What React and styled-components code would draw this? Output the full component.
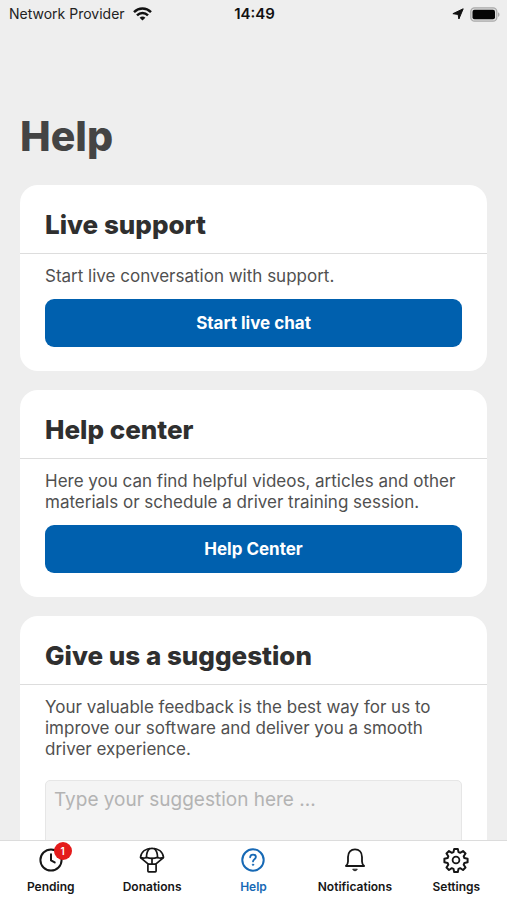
import React from "react";
import styled, { createGlobalStyle } from "styled-components";

const GlobalStyle = createGlobalStyle`
  * { box-sizing: border-box; }
  body {
    margin: 0;
    background: #eeeeee;
    font-family: Inter, "Liberation Sans", sans-serif;
  }
  h1, h2, p { margin: 0; }
`;

const Screen = styled.div`
  display: flex;
  flex-direction: column;
  height: 100vh;
  background: #eeeeee;
`;

const StatusBar = styled.header`
  display: grid;
  grid-template-columns: 1fr auto 1fr;
  align-items: center;
  height: 28px;
  flex: none;
  padding: 0 7px 0 9px;
  font-size: 14px;
  line-height: 20px;
  color: #222222;
`;

const StatusGroup = styled.div`
  display: flex;
  align-items: center;
  justify-content: ${(p) => (p.$end ? "flex-end" : "flex-start")};
  gap: ${(p) => (p.$end ? "6px" : "8px")};
`;

const Clock = styled.time`
  font-size: 15px;
  font-weight: 600;
  color: #111111;
`;

const Content = styled.main`
  flex: 1;
  min-height: 0;
  overflow-y: auto;
  scrollbar-width: none;
  padding: 80px 20px 20px;
`;

const Title = styled.h1`
  font-size: 41px;
  line-height: 56px;
  font-weight: 800;
  color: #444444;
`;

const CardList = styled.div`
  display: flex;
  flex-direction: column;
  gap: 19px;
  margin-top: 21px;
`;

const Card = styled.section`
  background: #ffffff;
  border-radius: 18px;
`;

const CardTitle = styled.h2`
  padding: 24px 25px 12px;
  border-bottom: 1px solid #dddddd;
  font-size: 26px;
  line-height: 32px;
  font-weight: 800;
  color: #2f2f2f;
`;

const CardBody = styled.div`
  display: flex;
  flex-direction: column;
  gap: ${(p) => (p.$roomy ? "20px" : "12px")};
  padding: 12px 25px 24px;
`;

const CardText = styled.p`
  font-size: 17px;
  line-height: 21px;
  color: #505050;
`;

const ActionButton = styled.button`
  height: 48px;
  border: 0;
  border-radius: 9px;
  background: #0060ae;
  color: #ffffff;
  font: inherit;
  font-size: 17px;
  font-weight: 700;
`;

const SuggestionBox = styled.textarea`
  height: 160px;
  padding: 6px 8px;
  border: 1px solid #e6e6e6;
  border-radius: 5px;
  background: #f4f4f4;
  font: inherit;
  font-size: 19px;
  line-height: 26px;
  color: #333333;
  resize: none;
  &::placeholder { color: #b3b3b3; opacity: 1; }
`;

const TabBar = styled.nav`
  display: grid;
  grid-template-columns: repeat(5, 1fr);
  flex: none;
  height: 60px;
  border-top: 1px solid #dcdcdc;
  background: #ffffff;
`;

const Tab = styled.a`
  display: flex;
  flex-direction: column;
  align-items: center;
  gap: 6px;
  padding-top: 6px;
  font-size: 12px;
  line-height: 16px;
  font-weight: 600;
  text-decoration: none;
  color: ${(p) => (p.$active ? "#1769b5" : "#161616")};
`;

const IconFrame = styled.span`
  position: relative;
  width: 26px;
  height: 26px;
`;

const Badge = styled.span`
  position: absolute;
  top: -5px;
  right: -8px;
  width: 18px;
  height: 18px;
  border-radius: 50%;
  background: #e41b1b;
  color: #ffffff;
  font-size: 10px;
  line-height: 18px;
  text-align: center;
`;

const Line = ({ children }) => (
  <svg width="26" height="26" viewBox="0 0 26 26" fill="none" stroke="currentColor"
    strokeWidth="1.8" strokeLinecap="round" strokeLinejoin="round" aria-hidden="true">
    {children}
  </svg>
);

const ClockIcon = () => (
  <Line>
    <circle cx="13" cy="13" r="10.6" strokeWidth="2" />
    <path d="M13 7.2v6.2l3.7 2" strokeWidth="2" />
  </Line>
);

const ParachuteIcon = () => (
  <Line>
    <g strokeWidth="1.7">
      <path d="M1.5 10.400C2.200 4.500 6.800 1.300 13 1.300s10.800 3.200 11.500 9.100c-2 .9-4 .9-5.900 0-3.500 1.100-7.700 1.100-11.200 0-1.900.9-3.900.9-5.900 0Z" />
      <path d="M7.400 10.400C7.500 6.400 8.800 3.200 10.500 1.600M18.600 10.400c-.1-4-1.400-7.200-3.100-8.800" />
      <path d="M1.800 10.900 9.300 17.200M24.200 10.900 16.700 17.200M13 11.400V17" />
      <rect x="8.900" y="17.200" width="8.200" height="7.600" rx="0.800" />
    </g>
  </Line>
);

const HelpIcon = () => (
  <Line>
    <circle cx="13" cy="13" r="10.700" strokeWidth="2" />
    <path d="M10.100 10.300c.2-1.700 1.300-2.600 2.900-2.600s2.900.9 2.900 2.400c0 2-2.900 2.200-2.900 4.300" />
    <circle cx="13" cy="17.700" r="0.700" fill="currentColor" strokeWidth="0.900" />
  </Line>
);

const BellIcon = () => (
  <Line>
    <path d="M3.900 19h18.200c-1.500-1.400-2.100-2.700-2.100-4.600V10c0-4.700-2.900-7.600-7-7.600S6 5.300 6 10v4.400c0 1.900-.6 3.200-2.100 4.600Z" />
    <path d="M10.800 22.500c1 1.700 3.400 1.700 4.400 0Z" fill="currentColor" strokeWidth="0.800" />
  </Line>
);

const GearIcon = () => (
  <Line>
    <circle cx="13" cy="13" r="3.400" />
    <path strokeWidth="2" d="M11.200 1.900h3.600l.7 3.200 1.700.7 2.800-1.800 2.500 2.500-1.800 2.800.7 1.700 3.200.7v3.600l-3.200.7-.7 1.700 1.800 2.800-2.500 2.500-2.800-1.800-1.700.7-.7 3.200h-3.600l-.7-3.200-1.700-.7L6 23 3.500 20.500l1.800-2.800-.7-1.700-3.200-.7v-3.600l3.200-.7.7-1.700-1.800-2.800L6 4l2.800 1.800 1.700-.7Z" />
  </Line>
);

const WifiIcon = () => (
  <svg width="19" height="14" viewBox="0 0 19 14" fill="none" stroke="#111111" strokeWidth="2.500" aria-label="Wi-Fi">
    <path d="M1 5.100C5.900.4 13.100.4 18 5.100M4 8.400c3.200-3.100 7.800-3.100 11 0" />
    <path d="M9.500 13.500 6.600 10.700c1.600-1.500 4.200-1.500 5.800 0Z" fill="#111111" stroke="none" />
  </svg>
);

const LocationIcon = () => (
  <svg width="12" height="12" viewBox="0 0 12 12" fill="#111111" aria-label="Location">
    <path d="M11.200.8 6.900 11 6.100 6.400.9 5.700Z" stroke="#111111" strokeWidth="1" strokeLinejoin="round" />
  </svg>
);

const BatteryIcon = () => (
  <svg width="30" height="15" viewBox="0 0 30 15" aria-label="Battery">
    <rect x="0.800" y="0.800" width="26" height="13.400" rx="3.800" fill="#dddddd" stroke="#aaaaaa" strokeWidth="1.300" />
    <rect x="2.500" y="2.800" width="22.500" height="9.500" rx="2" fill="#050505" />
    <path d="M28 5.200c2 .8 2 3.800 0 4.600Z" fill="#aaaaaa" />
  </svg>
);

const tabs = [
  { id: "pending", label: "Pending", Icon: ClockIcon, badge: 1 },
  { id: "donations", label: "Donations", Icon: ParachuteIcon },
  { id: "help", label: "Help", Icon: HelpIcon },
  { id: "notifications", label: "Notifications", Icon: BellIcon },
  { id: "settings", label: "Settings", Icon: GearIcon },
];

export default function App() {
  return (
    <Screen>
      <GlobalStyle />
      <StatusBar>
        <StatusGroup>
          <span>Network Provider</span>
          <WifiIcon />
        </StatusGroup>
        <Clock>14:49</Clock>
        <StatusGroup $end>
          <LocationIcon />
          <BatteryIcon />
        </StatusGroup>
      </StatusBar>
      <Content>
        <Title>Help</Title>
        <CardList>
          <Card>
            <CardTitle>Live support</CardTitle>
            <CardBody>
              <CardText>Start live conversation with support.</CardText>
              <ActionButton type="button">Start live chat</ActionButton>
            </CardBody>
          </Card>
          <Card>
            <CardTitle>Help center</CardTitle>
            <CardBody>
              <CardText>
                Here you can find helpful videos, articles and other materials or schedule a driver training session.
              </CardText>
              <ActionButton type="button">Help Center</ActionButton>
            </CardBody>
          </Card>
          <Card>
            <CardTitle id="suggestion-title">Give us a suggestion</CardTitle>
            <CardBody $roomy>
              <CardText>
                Your valuable feedback is the best way for us to improve our software and deliver you a smooth driver
                experience.
              </CardText>
              <SuggestionBox aria-labelledby="suggestion-title" placeholder="Type your suggestion here ..." />
            </CardBody>
          </Card>
        </CardList>
      </Content>
      <TabBar>
        {tabs.map(({ id, label, Icon, badge }) => (
          <Tab key={id} href={`#${id}`} $active={id === "help"} aria-current={id === "help" ? "page" : undefined}>
            <IconFrame>
              <Icon />
              {badge && <Badge>{badge}</Badge>}
            </IconFrame>
            {label}
          </Tab>
        ))}
      </TabBar>
    </Screen>
  );
}
